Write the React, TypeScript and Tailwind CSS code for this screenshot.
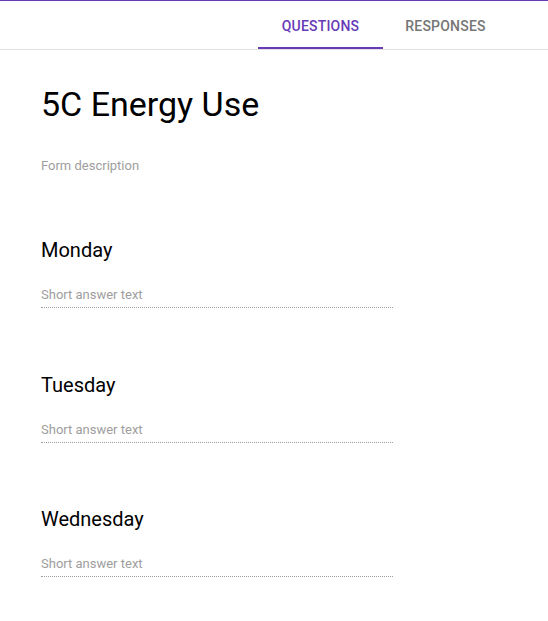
import React from "react";

const font = { fontFamily: "Roboto, 'Liberation Sans', sans-serif" };

function Question({ title, mt }: { title: string; mt: string }) {
  return (
    <div className={mt + " w-[352px]"}>
      <div className="text-[20px] leading-[24px] text-black">{title}</div>
      <div className="mt-[23px] pt-[1px] text-[13px] leading-[18px] text-[#9e9e9e] pb-[3px] border-b border-dotted border-[#9e9e9e]">
        Short answer text
      </div>
    </div>
  );
}

export default function App() {
  return (
    <div className="w-[548px] h-[621px] bg-white" style={font}>
      <div className="border-t border-[#673ab7] h-[50px] border-b border-b-[#e0e0e0] flex justify-end pr-[40px]">
        <div className="w-[125px] pt-[2px] flex items-center justify-center relative text-[14px] font-medium text-[#673ab7] tracking-[0.2px]">
          QUESTIONS
          <div className="absolute left-0 right-0 bottom-0 h-[2px] bg-[#673ab7]" />
        </div>
        <div className="w-[125px] pt-[2px] flex items-center justify-center text-[14px] font-medium text-[#757575] tracking-[0.2px]">
          RESPONSES
        </div>
      </div>
      <div className="pl-[41px]">
        <div className="pt-[34px] text-[34px] leading-[40px] text-black">5C Energy Use</div>
        <div className="mt-[33px] text-[13px] leading-[18px] text-[#9e9e9e]">Form description</div>
        <Question title="Monday" mt="mt-[63px]" />
        <Question title="Tuesday" mt="mt-[65px]" />
        <Question title="Wednesday" mt="mt-[64px]" />
      </div>
    </div>
  );
}
